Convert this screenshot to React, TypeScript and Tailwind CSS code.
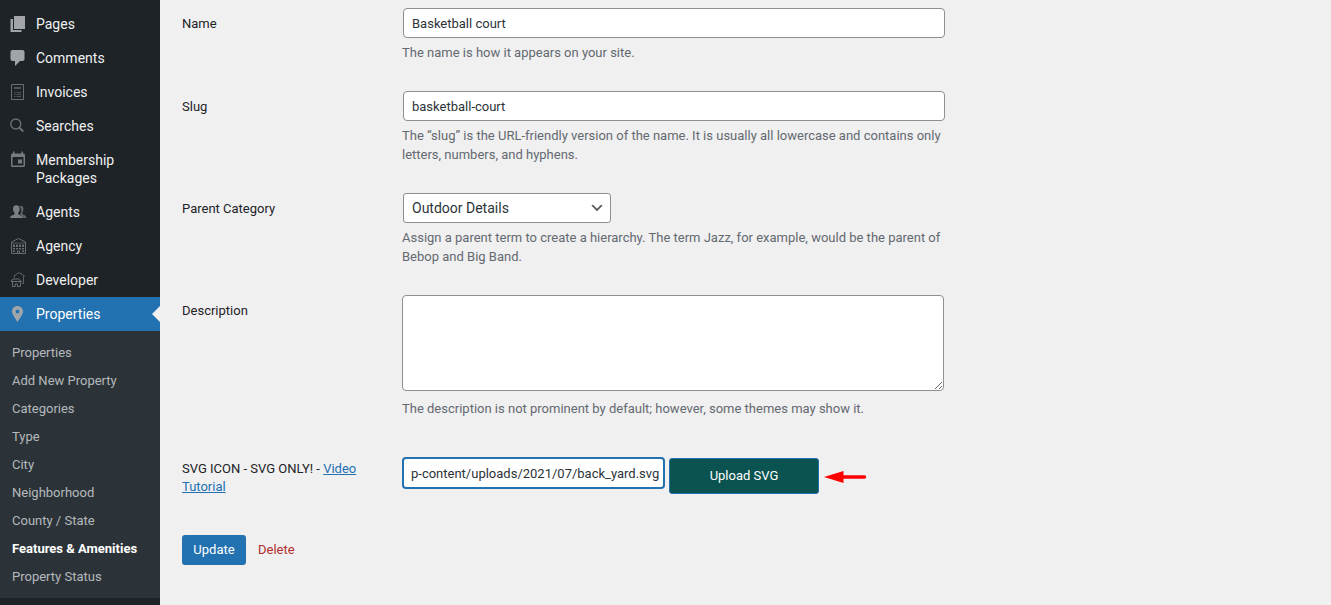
import type { ReactNode } from "react";

const menu = [
  { label: "Pages", icon: <PagesIcon /> },
  { label: "Comments", icon: <CommentsIcon /> },
  { label: "Invoices", icon: <InvoiceIcon /> },
  { label: "Searches", icon: <SearchIcon /> },
  { label: "Membership Packages", icon: <CalendarIcon /> },
  { label: "Agents", icon: <AgentsIcon /> },
  { label: "Agency", icon: <AgencyIcon /> },
  { label: "Developer", icon: <DeveloperIcon /> },
];

const submenu = [
  "Properties",
  "Add New Property",
  "Categories",
  "Type",
  "City",
  "Neighborhood",
  "County / State",
  "Features & Amenities",
  "Property Status",
];

const current = "Features & Amenities";

function Icon({ children }: { children: ReactNode }) {
  return (
    <svg
      viewBox="0 0 20 20"
      className="size-5 shrink-0"
      fill="none"
      aria-hidden="true"
    >
      {children}
    </svg>
  );
}

function PagesIcon() {
  return (
    <Icon>
      <path fill="#a1a5a9" d="M6 15V2h11v13H6zm-1 1h8.500v2H2.500V5H5v11z" />
    </Icon>
  );
}

function CommentsIcon() {
  return (
    <Icon>
      <path
        fill="#a1a5a9"
        d="M4.500 2h10c1.100 0 2 .9 2 2v7c0 1.100-.9 2-2 2H12l-5 5v-5H4.500c-1.100 0-2-.9-2-2V4c0-1.100.9-2 2-2z"
      />
    </Icon>
  );
}

function InvoiceIcon() {
  return (
    <Icon>
      <path stroke="#6a6e72" d="M3.500 2.500h12v15h-12z" />
      <path
        stroke="#505458"
        d="M6 5.500h7M6 6.500h7M6 10.500h1.500M8.500 10.500H13M6 12.500h1.500M8.500 12.500H13M6 14.500h1.500M8.500 14.500H13"
      />
    </Icon>
  );
}

function SearchIcon() {
  return (
    <Icon>
      <circle cx="7.800" cy="8" r="5" stroke="#6a6e72" strokeWidth="1.400" />
      <path stroke="#6a6e72" strokeWidth="2" d="M11.500 11.700l3.800 3.800" />
    </Icon>
  );
}

function CalendarIcon() {
  return (
    <Icon>
      <path
        fill="#777b7f"
        fillRule="evenodd"
        d="M5 1.500h1.500v2h7v-2H15v2h.5c.8 0 1.500.7 1.500 1.500v10.500c0 .8-.7 1.500-1.500 1.500h-11c-.8 0-1.500-.7-1.500-1.500V5c0-.8.7-1.500 1.500-1.500H5v-2zM4.500 7v8.500h11V7h-11z"
      />
      <path fill="#777b7f" d="M10 9.500h4v4h-4z" />
    </Icon>
  );
}

function AgentsIcon() {
  return (
    <Icon>
      <path
        fill="#63676b"
        d="M11.500 4c2-.8 4 .4 3.900 3 0 1.500-.5 2.800-1.200 3.600v1.300c1.600.9 3.900 1.300 4.300 4.100h-3c-.6-2-2.300-2.500-3.600-3.200 1.900-2.300 2-6.300-.4-8.800z"
      />
      <path
        fill="#7b7f83"
        d="M8.300 3.300c2.300 0 3.500 1.500 3.400 3.800 0 1.500-.5 2.900-1.400 3.700v1.500c1.600 1.100 4.400 1.300 4.700 3.700H2c.3-2.400 2.900-2.600 4.500-3.700v-1.500c-.9-.8-1.500-2.200-1.500-3.700-.1-2.300 1.100-3.800 3.300-3.800z"
      />
    </Icon>
  );
}

function AgencyIcon() {
  return (
    <Icon>
      <path stroke="#6a6e72" d="M3.500 17.500V6l7-3.500 7 3.500v11.500z" />
      <path stroke="#54585c" d="M4 7h13" />
      <path
        fill="#6a6e72"
        d="M5 8.500h2V11H5zM8 8.500h2V11H8zM11 8.500h2V11h-2zM14 8.500h2V11h-2zM5 12h2v1.500H5zM8 12h2v1.500H8zM11 12h2v1.500h-2zM14 12h2v1.500h-2zM5 14.500h2v1.500H5zM14 14.500h2v1.500h-2z"
      />
      <path stroke="#6a6e72" d="M9.500 17.500V15h2v2.500" />
    </Icon>
  );
}

function DeveloperIcon() {
  return (
    <Icon>
      <path
        stroke="#5e6266"
        strokeLinejoin="round"
        d="M6.500 7.500V5.800L5.800 6l5.200-3.500L16.500 6l-1 .2v7.300h-1.500"
      />
      <path
        stroke="#6a6e72"
        strokeLinejoin="round"
        d="M3 11.500l2-2.500h5.500l3 2.500zM4.500 12v4.500h2.700V14h2.200v2.500h3V12"
      />
    </Icon>
  );
}

function PinIcon() {
  return (
    <Icon>
      <path
        fill="#a0a5aa"
        fillRule="evenodd"
        d="M9.500 2c3.200 0 5.500 2.400 5.500 5.500C15 11 11.500 14 9.500 18.200 7.500 14 4 11 4 7.500 4 4.400 6.300 2 9.500 2zm0 3.700a1.900 1.900 0 100 3.800 1.900 1.900 0 000-3.800z"
      />
    </Icon>
  );
}

function Sidebar() {
  return (
    <nav className="w-40 shrink-0 bg-[#1d2327] pt-[7px]">
      <ul>
        {menu.map((item) => (
          <li key={item.label}>
            <a
              href="#"
              className="flex gap-2 py-2 pl-2 pr-4 text-sm leading-[18px] text-[#f0f0f1]"
            >
              <span className="-my-px h-5">{item.icon}</span>
              {item.label}
            </a>
          </li>
        ))}
        <li>
          <a
            href="#"
            className="relative flex gap-2 bg-[#2271b1] py-2 pl-2 pr-4 text-sm leading-[18px] text-white"
          >
            <span className="-my-px h-5">
              <PinIcon />
            </span>
            Properties
            <span className="absolute right-0 top-[9px] border-y-8 border-r-8 border-y-transparent border-r-[#f0f0f1]" />
          </a>
          <ul className="bg-[#2c3338] pb-[7px] pt-2">
            {submenu.map((label) => (
              <li key={label}>
                <a
                  href="#"
                  className={
                    label === current
                      ? "block px-3 py-[5px] text-[13px] leading-[18px] font-bold text-white"
                      : "block px-3 py-[5px] text-[13px] leading-[18px] text-[#b5b9bd]"
                  }
                >
                  {label}
                </a>
              </li>
            ))}
          </ul>
        </li>
      </ul>
    </nav>
  );
}

function Row({ label, children }: { label: ReactNode; children: ReactNode }) {
  return (
    <div className="flex">
      <div className="w-[220px] shrink-0 pr-6 pt-2 leading-[18px]">
        {label}
      </div>
      <div className="min-w-0 max-w-[544px] flex-1">{children}</div>
    </div>
  );
}

function Help({ children }: { children: ReactNode }) {
  return <p className="mt-[5px] leading-[19px] text-[#646970]">{children}</p>;
}

export default function App() {
  return (
    <div className="flex min-h-screen bg-[#f0f0f1] font-[Roboto,sans-serif] text-[13px] text-[#1d2327]">
      <Sidebar />
      <main className="min-w-0 flex-1 px-[22px] pt-[7px]">
        <form onSubmit={(e) => e.preventDefault()}>
          <div className="flex flex-col gap-7">
            <Row label={<label htmlFor="name">Name</label>}>
              <input
                id="name"
                type="text"
                defaultValue="Basketball court"
                className="m-px block h-[30px] w-[calc(100%-2px)] rounded border border-[#8c8f94] bg-white px-2 text-[#2c3338]"
              />
              <Help>The name is how it appears on your site.</Help>
            </Row>

            <Row label={<label htmlFor="slug">Slug</label>}>
              <input
                id="slug"
                type="text"
                defaultValue="basketball-court"
                className="m-px block h-[30px] w-[calc(100%-2px)] rounded border border-[#8c8f94] bg-white px-2 text-[#2c3338]"
              />
              <Help>
                The “slug” is the URL-friendly version of the name. It is
                usually all lowercase and contains only letters, numbers, and
                hyphens.
              </Help>
            </Row>

            <Row label={<label htmlFor="parent">Parent Category</label>}>
              <div className="relative m-px w-52">
                <select
                  id="parent"
                  className="block h-[30px] w-full appearance-none rounded-[3px] border border-[#8c8f94] bg-white pl-2 pr-6 text-sm text-[#2c3338]"
                >
                  <option>Outdoor Details</option>
                </select>
                <svg
                  viewBox="0 0 20 20"
                  className="pointer-events-none absolute right-1.5 top-[7px] size-4"
                  aria-hidden="true"
                >
                  <path fill="#555" d="M5 6l5 5 5-5 2 1-7 7-7-7 2-1z" />
                </svg>
              </div>
              <Help>
                Assign a parent term to create a hierarchy. The term Jazz, for
                example, would be the parent of Bebop and Big Band.
              </Help>
            </Row>

            <Row label={<label htmlFor="description">Description</label>}>
              <div className="pb-1.5">
                <textarea
                  id="description"
                  className="mb-2 mt-px block h-24 w-[calc(100%-2px)] rounded border border-[#8c8f94] bg-white px-2 py-1"
                />
                <Help>
                  The description is not prominent by default; however, some
                  themes may show it.
                </Help>
              </div>
            </Row>

            <Row
              label={
                <>
                  <label htmlFor="svg-icon">SVG ICON - SVG ONLY! -</label>{" "}
                  <a href="#" className="text-[#2271b1] underline">
                    Video
                    <br />
                    Tutorial
                  </a>
                </>
              }
            >
              <div className="flex items-center gap-1 pt-[5px]">
                <input
                  id="svg-icon"
                  type="text"
                  defaultValue="p-content/uploads/2021/07/back_yard.svg"
                  className="mb-1.5 h-8 w-[263px] shrink-0 rounded border-2 border-[#2271b1] bg-white pl-[7px] pr-1 text-[#2c3338] outline-none"
                />
                <button
                  type="button"
                  className="h-9 w-[150px] shrink-0 rounded-[3px] border border-[#2271b1] bg-[#0b5351] text-white"
                >
                  Upload SVG
                </button>
                <svg
                  viewBox="0 0 44 14"
                  className="h-3.5 w-11 shrink-0"
                  aria-hidden="true"
                >
                  <path fill="#fe0000" d="M1 8l19.500-6v12z" />
                  <path
                    stroke="#fe0000"
                    strokeWidth="3.500"
                    strokeLinecap="round"
                    d="M19 8h22.500"
                  />
                </svg>
              </div>
            </Row>
          </div>

          <div className="mt-[39px] flex items-center gap-3">
            <button
              type="submit"
              className="h-[30px] w-16 rounded-[3px] bg-[#2271b1] text-white"
            >
              Update
            </button>
            <a href="#" className="text-[#b32d2e]">
              Delete
            </a>
          </div>
        </form>
      </main>
    </div>
  );
}
